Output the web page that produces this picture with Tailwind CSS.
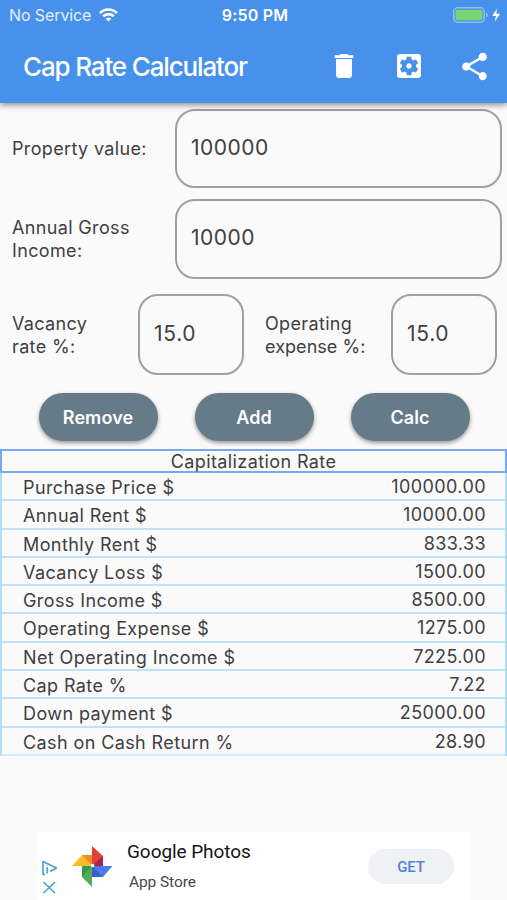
<!DOCTYPE html>
<html lang="en">
<head>
<meta charset="utf-8">
<title>Cap Rate Calculator</title>
<script src="https://cdn.jsdelivr.net/npm/@tailwindcss/browser@4"></script>
</head>
<body class="bg-[#fafafa] font-['Inter','Liberation_Sans',sans-serif] text-[#404040]">
<div class="flex h-[900px] w-[507px] flex-col overflow-hidden">
  <header class="relative h-[103px] shrink-0 bg-[#4791eb] text-white shadow-[0_2px_6px_rgba(0,0,0,0.45)]">
    <div class="grid h-[30px] grid-cols-3 items-center pr-1.5 pl-[9px] text-[16px] leading-[30px]">
      <div class="flex items-center gap-2 text-[#e4f0ff]"><span class="-tracking-[0.1px]">No Service</span>
        <svg class="h-[14px] w-[19px]" viewBox="0 0 19 14" fill="none" stroke="#fff" stroke-width="2.7"><path d="M1 5.1C5.8.3 13.2.3 18 5.1M4.2 8.3c3-3 7.6-3 10.6 0"/><path d="M6.7 10.7c1.6-1.6 4-1.6 5.6 0L9.5 13.5z" fill="#fff" stroke="none"/></svg>
      </div>
      <div class="text-center font-semibold tracking-[0.2px]">9:50 PM</div>
      <svg class="h-[16px] w-[48px] justify-self-end" viewBox="0 0 48 16"><rect x=".75" y=".75" width="30.5" height="14.5" rx="4" fill="none" stroke="#8fbcf3" stroke-width="1.5"/><rect x="2.5" y="2.8" width="27" height="10.4" rx="2" fill="#76d672"/><path d="M33 5.5q2 .7 2 2.5t-2 2.5z" fill="#8fbcf3"/><path d="M44 1.5 39.3 9H43l-1.4 6L47 6.800h-3.600z" fill="#fff"/></svg>
    </div>
    <div class="flex h-[72px] items-center pr-[16px] pl-[23px]">
      <h1 class="grow text-[26px] font-medium tracking-[-1.15px]">Cap Rate Calculator</h1>
      <svg class="mr-[33px] size-[32px]" viewBox="0 0 24 24" fill="#fff"><path d="M6 19c0 1.100.9 2 2 2h8c1.100 0 2-.9 2-2V6.800H6v12.200zM19 4h-3.500l-1-1h-5l-1 1H5v2h14V4z"/></svg>
      <svg class="mr-[33px] size-[32px]" viewBox="0 0 24 24" fill="#fff"><path d="M12 10c-1.100 0-2 .9-2 2s.9 2 2 2 2-.9 2-2-.9-2-2-2zm7-7H5c-1.110 0-2 .9-2 2v14c0 1.100.89 2 2 2h14c1.110 0 2-.9 2-2V5c0-1.100-.89-2-2-2zm-1.750 9c0 .23-.02.46-.05.68l1.480 1.160c.13.11.17.3.08.45l-1.400 2.420c-.09.15-.27.21-.43.15l-1.740-.7c-.36.28-.76.51-1.180.69l-.26 1.850c-.03.17-.18.3-.35.3h-2.800c-.17 0-.32-.13-.35-.29l-.26-1.850c-.43-.18-.82-.41-1.180-.69l-1.740.7c-.16.06-.34 0-.43-.15l-1.400-2.420c-.09-.15-.05-.34.08-.45l1.480-1.160c-.03-.23-.05-.46-.05-.69 0-.23.02-.46.05-.68l-1.480-1.160c-.13-.11-.17-.3-.08-.45l1.400-2.420c.09-.15.27-.21.43-.15l1.740.7c.36-.28.76-.51 1.180-.69l.26-1.850c.03-.17.18-.3.35-.3h2.800c.17 0 .32.13.35.29l.26 1.850c.43.18.82.41 1.180.69l1.740-.7c.16-.06.34 0 .43.15l1.400 2.420c.09.15.05.34-.08.45l-1.480 1.160c.03.23.05.46.05.69z"/></svg>
      <svg class="size-[33px]" viewBox="0 0 24 24" fill="#fff"><path d="M18 16.080c-.76 0-1.440.3-1.960.77L8.910 12.700c.05-.23.09-.46.09-.7s-.04-.47-.09-.7l7.050-4.110c.54.5 1.250.81 2.040.81 1.660 0 3-1.340 3-3s-1.340-3-3-3-3 1.340-3 3c0 .24.04.47.09.7L8.040 9.810C7.500 9.310 6.790 9 6 9c-1.660 0-3 1.340-3 3s1.340 3 3 3c.79 0 1.500-.31 2.040-.81l7.120 4.160c-.05.21-.08.43-.08.65 0 1.610 1.310 2.920 2.920 2.920 1.610 0 2.920-1.310 2.920-2.920s-1.310-2.920-2.920-2.920z"/></svg>
    </div>
  </header>

  <main class="text-[18px] leading-[23px] tracking-[0.35px]">
    <div class="mt-[6px] flex h-[79px] items-center pr-[5px] pl-3">
      <div class="w-[163px]">Property value:</div>
      <div class="flex h-full grow items-center rounded-[20px] border-2 border-[#a0a0a0] pb-[3px] pl-[14px] text-[21px] tracking-[0.5px]">100000</div>
    </div>
    <div class="mt-[11px] flex h-[80px] items-center pr-[5px] pl-3">
      <div class="w-[163px]">Annual Gross<br>Income:</div>
      <div class="flex h-full grow items-center rounded-[20px] border-2 border-[#a0a0a0] pb-[3px] pl-[14px] text-[21px] tracking-[0.5px]">10000</div>
    </div>
    <div class="mt-[15px] flex h-[81px] items-center pl-3">
      <div class="w-[126px]">Vacancy<br>rate %:</div>
      <div class="flex h-full w-[106px] items-center rounded-[20px] border-2 border-[#a0a0a0] pb-[3px] pl-[14px] text-[21px] tracking-[0.7px]">15.0</div>
      <div class="ml-[21px] w-[126px]">Operating<br><span class="tracking-[0.05px]">expense %:</span></div>
      <div class="flex h-full w-[106px] items-center rounded-[20px] border-2 border-[#a0a0a0] pb-[3px] pl-[14px] text-[21px] tracking-[0.7px]">15.0</div>
    </div>
    <div class="mt-[18px] flex gap-[37px] pl-[38.5px] font-semibold tracking-[0.1px] text-white">
      <div class="flex h-[48px] w-[119px] items-center justify-center rounded-full bg-[#657b87] shadow-[0_2px_4px_rgba(0,0,0,0.4)]">Remove</div>
      <div class="flex h-[48px] w-[119px] items-center justify-center rounded-full bg-[#657b87] shadow-[0_2px_4px_rgba(0,0,0,0.4)]">Add</div>
      <div class="flex h-[48px] w-[119px] items-center justify-center rounded-full bg-[#657b87] shadow-[0_2px_4px_rgba(0,0,0,0.4)]">Calc</div>
    </div>
    <section class="mt-[8px]">
      <h2 class="h-[24px] border-2 border-[#76aaed] text-center leading-[21px] tracking-[0.4px]">Capitalization Rate</h2>
      <dl class="grid auto-rows-[28.3px] border-x-2 border-[#b0dcfa] leading-[30px] tracking-[0.4px]">
        <div class="flex justify-between border-b-2 border-[#bfe1fa] pr-[19px] pl-[21px]"><dt>Purchase Price $</dt><dd class="-mt-px">100000.00</dd></div>
        <div class="flex justify-between border-b-2 border-[#bfe1fa] pr-[19px] pl-[21px]"><dt>Annual Rent $</dt><dd class="-mt-px">10000.00</dd></div>
        <div class="flex justify-between border-b-2 border-[#bfe1fa] pr-[19px] pl-[21px]"><dt>Monthly Rent $</dt><dd class="-mt-px">833.33</dd></div>
        <div class="flex justify-between border-b-2 border-[#bfe1fa] pr-[19px] pl-[21px]"><dt>Vacancy Loss $</dt><dd class="-mt-px">1500.00</dd></div>
        <div class="flex justify-between border-b-2 border-[#bfe1fa] pr-[19px] pl-[21px]"><dt>Gross Income $</dt><dd class="-mt-px">8500.00</dd></div>
        <div class="flex justify-between border-b-2 border-[#bfe1fa] pr-[19px] pl-[21px]"><dt>Operating Expense $</dt><dd class="-mt-px">1275.00</dd></div>
        <div class="flex justify-between border-b-2 border-[#bfe1fa] pr-[19px] pl-[21px]"><dt>Net Operating Income $</dt><dd class="-mt-px">7225.00</dd></div>
        <div class="flex justify-between border-b-2 border-[#bfe1fa] pr-[19px] pl-[21px]"><dt>Cap Rate %</dt><dd class="-mt-px">7.22</dd></div>
        <div class="flex justify-between border-b-2 border-[#bfe1fa] pr-[19px] pl-[21px]"><dt>Down payment $</dt><dd class="-mt-px">25000.00</dd></div>
        <div class="flex justify-between border-b-2 border-[#d5ebfa] pr-[19px] pl-[21px]"><dt>Cash on Cash Return %</dt><dd class="-mt-px">28.90</dd></div>
      </dl>
    </section>
  </main>

  <aside class="mt-auto ml-[37px] flex h-[68px] w-[433px] shrink-0 bg-white font-['Roboto',sans-serif]">
    <div class="flex w-[35px] flex-col items-start gap-[5px] pt-[28px] pl-[5px]">
      <svg class="h-[16px] w-[16px]" viewBox="0 0 16 16" fill="none" stroke="#42a6cb" stroke-width="1.6" stroke-linejoin="round"><path d="M3 14.500H1V1.500L14.500 8 8 11.500M5.300 7v6.500M5.300 3.800v1.800"/></svg>
      <svg class="h-[13px] w-[14px]" viewBox="0 0 14 13" fill="none" stroke="#42a6cb" stroke-width="1.6"><path d="m1.500 1 11.500 11M13 1 1.500 12"/></svg>
    </div>
    <svg class="mt-[14px] h-[41px] w-[41px]" viewBox="0 0 41 41"><path d="M20 0 31 10v10H20z" fill="#db4437"/><path d="M20 20 31 10v10z" fill="#ad1f59"/><path d="M0 20 10 9h10v11z" fill="#fbbc2c"/><path d="M20 20 10 9h10z" fill="#ef8d22"/><path d="M20 41 10 31V20h10z" fill="#54ac5b"/><path d="M20 20 10 31V20z" fill="#3b9650"/><path d="M40.500 20 31 31H20V20z" fill="#4b7be5"/><path d="m20 20 11 11H20z" fill="#3860cc"/><circle cx="20.500" cy="19.500" r="1.800" fill="#fff"/></svg>
    <div class="ml-[14px] grow pt-[8px]">
      <div class="text-[19px] leading-[24px] tracking-[-0.07px] text-[#151515]">Google Photos</div>
      <div class="mt-[8px] pl-[2px] text-[15.5px] leading-[20px] tracking-[-0.1px] text-[#484848]">App Store</div>
    </div>
    <div class="mt-[17px] mr-[16px] flex h-[35px] w-[86px] items-center justify-center rounded-full bg-[#eff1f5] pt-px text-[15px] font-medium tracking-[-0.2px] text-[#5583d2]">GET</div>
  </aside>
</div>
</body>
</html>
